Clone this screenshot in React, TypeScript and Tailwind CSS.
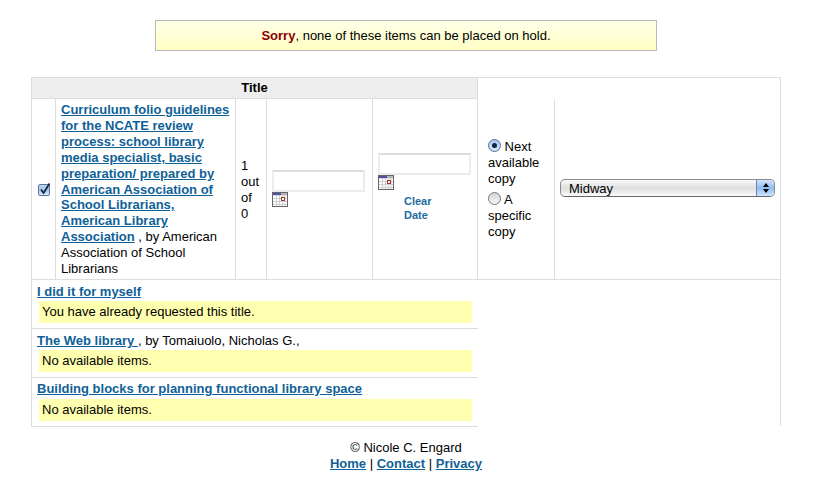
function CalendarIcon() {
  return (
    <svg width="16" height="15" viewBox="0 0 16 15" className="block">
      <rect x="0.5" y="0.5" width="15" height="14" fill="#fff" stroke="#666" />
      <rect x="1" y="1" width="14" height="2.5" fill="#b5b5b5" />
      <rect x="1" y="1" width="8" height="2" fill="#4f4fa8" />
      <path d="M1 6.5H15M1 9.5H15M1 12.5H15M4.5 4V14M7.5 4V14M10.5 4V14M13 4V14" stroke="#d0d0d0" strokeWidth="1" fill="none" />
      <rect x="9.5" y="5.5" width="3" height="3" fill="#fff" stroke="#a83232" />
    </svg>
  );
}

function Checkbox() {
  return (
    <span className="block mx-auto w-[12px] h-[12px] rounded-[2px] border border-[#5f7796] bg-linear-to-b from-[#b9d2ee] via-[#a3c6ec] to-[#d6e8fb]">
      <svg width="12" height="13" viewBox="0 0 12 13" className="block overflow-visible -mt-[2px]">
        <path d="M2 6.5L4.6 10L10.5 0.5" stroke="#10233f" strokeWidth="1.7" fill="none" />
      </svg>
    </span>
  );
}

function Radio({ on }: { on?: boolean }) {
  if (on) {
    return (
      <span className="inline-flex items-center justify-center w-[13px] h-[13px] rounded-full border border-[#56708f] bg-linear-to-b from-[#a9c7ea] to-[#d3e6fb] align-top">
        <span className="w-[5px] h-[5px] rounded-full bg-[#10233f]"></span>
      </span>
    );
  }
  return (
    <span className="inline-block w-[13px] h-[13px] rounded-full border border-[#777] bg-linear-to-b from-[#d5d5d5] to-[#f8f8f8] align-top"></span>
  );
}

function SelectBox() {
  return (
    <div className="flex h-[18px] w-[215px] mb-[2px] rounded-[5px] border border-[#8a8a8a] border-b-[#666] overflow-hidden bg-linear-to-b from-[#fafafa] via-[#dedede] to-[#fbfbfb]">
      <span className="flex-1 pl-2 pt-px text-[13px] leading-[16px]">Midway</span>
      <span className="flex flex-col items-center justify-center gap-[2px] w-[18px] bg-linear-to-b from-[#d5e5f8] via-[#8dbcf0] to-[#cfe6fd] border-l border-[#5f86c0]">
        <span className="w-0 h-0 border-x-[3px] border-x-transparent border-b-[4px] border-b-black"></span>
        <span className="w-0 h-0 border-x-[3px] border-x-transparent border-t-[4px] border-t-black"></span>
      </span>
    </div>
  );
}

function BlockedRow({ title, by, note, last, side }: { title: string; by?: string; note: string; last?: boolean; side?: boolean }) {
  return (
    <tr>
      <td colSpan={5} className={"border-l border-b border-[#ddd] px-[5px] pb-[5px] " + (last ? "pt-[3px]" : "pt-[4px]")}>
        <div className="leading-[16px] whitespace-nowrap">
          <a href="#" className="font-bold text-[#0f6197] underline">{title}</a>
          {by}
        </div>
        <div className={"ml-[2px] mr-px bg-[#ffffb0] pl-[3px] py-[3px] leading-[16px] " + (last ? "mt-[2px]" : "mt-px")}>{note}</div>
      </td>
      {side && <td rowSpan={3} colSpan={2} className="border-r border-[#ddd]"></td>}
    </tr>
  );
}

export default function App() {
  return (
    <div className="h-[497px] bg-white pt-5 text-[13px] leading-4 text-black font-['Liberation_Sans',Arial,sans-serif] overflow-hidden">
      <div className="ml-[155px] w-[502px] h-[31px] border border-[#b9b9b9] bg-linear-to-b from-[#ffffe8] to-[#ffffc4] text-center leading-[29px]">
        <b className="text-[#8b0000]">Sorry</b>, none of these items can be placed on hold.
      </div>

      <table className="mt-[26px] ml-[31px] w-[750px] table-fixed border-collapse">
        <colgroup>
          <col className="w-[24px]" />
          <col className="w-[180px]" />
          <col className="w-[31px]" />
          <col className="w-[106px]" />
          <col className="w-[105px]" />
          <col className="w-[77px]" />
          <col />
        </colgroup>
        <tbody>
          <tr className="h-[21px]">
            <th colSpan={5} className="border border-[#ddd] bg-[#eeeeee] text-center font-bold leading-4">Title</th>
            <td colSpan={2} className="border-t border-r border-[#ddd]"></td>
          </tr>
          <tr>
            <td className="border border-[#ddd] pt-[2px]"><Checkbox /></td>
            <td className="border border-[#ddd] px-[5px] pt-[3px] pb-[2px] leading-[15.9px]">
              <a href="#" className="font-bold text-[#0f6197] underline">
                Curriculum folio guidelines for the NCATE review process: school library media specialist, basic preparation/ prepared by American Association of School Librarians, American Library Association
              </a>{" "}
              , by American Association of School Librarians
            </td>
            <td className="border border-[#ddd] px-[5px] pt-[2px]">1 out of 0</td>
            <td className="border border-[#ddd] px-[5px]">
              <input type="text" className="block w-[93px] h-[22px] border-2 border-[#ececec] border-t-[#dcdcdc] bg-white" />
              <CalendarIcon />
            </td>
            <td className="border border-[#ddd] px-[5px]">
              <input type="text" className="block w-[93px] h-[22px] border-2 border-[#ececec] border-t-[#dcdcdc] bg-white" />
              <CalendarIcon />
              <a href="#" className="block mt-[4px] mb-[3px] pl-[26px] w-[70px] text-[11px] leading-[14px] font-bold text-[#1d6a9f]">Clear Date</a>
            </td>
            <td className="border-l border-r border-b border-[#ddd] px-[10px] pt-[2px]">
              <div className="mb-[5px]"><Radio on /> Next available copy</div>
              <div><Radio /> A specific copy</div>
            </td>
            <td className="border-l border-r border-b border-[#ddd] px-[5px]"><SelectBox /></td>
          </tr>
          <BlockedRow title="I did it for myself" note="You have already requested this title." side />
          <BlockedRow title="The Web library " by=" , by Tomaiuolo, Nicholas G.," note="No available items." />
          <BlockedRow title="Building blocks for planning functional library space" note="No available items." last />
        </tbody>
      </table>

      <div className="mt-[13px] ml-[31px] w-[750px] text-center">
        <div>© Nicole C. Engard</div>
        <div>
          <a href="#" className="font-bold text-[#0f6197] underline">Home</a> |{" "}
          <a href="#" className="font-bold text-[#0f6197] underline">Contact</a> |{" "}
          <a href="#" className="font-bold text-[#0f6197] underline">Privacy</a>
        </div>
      </div>
    </div>
  );
}
